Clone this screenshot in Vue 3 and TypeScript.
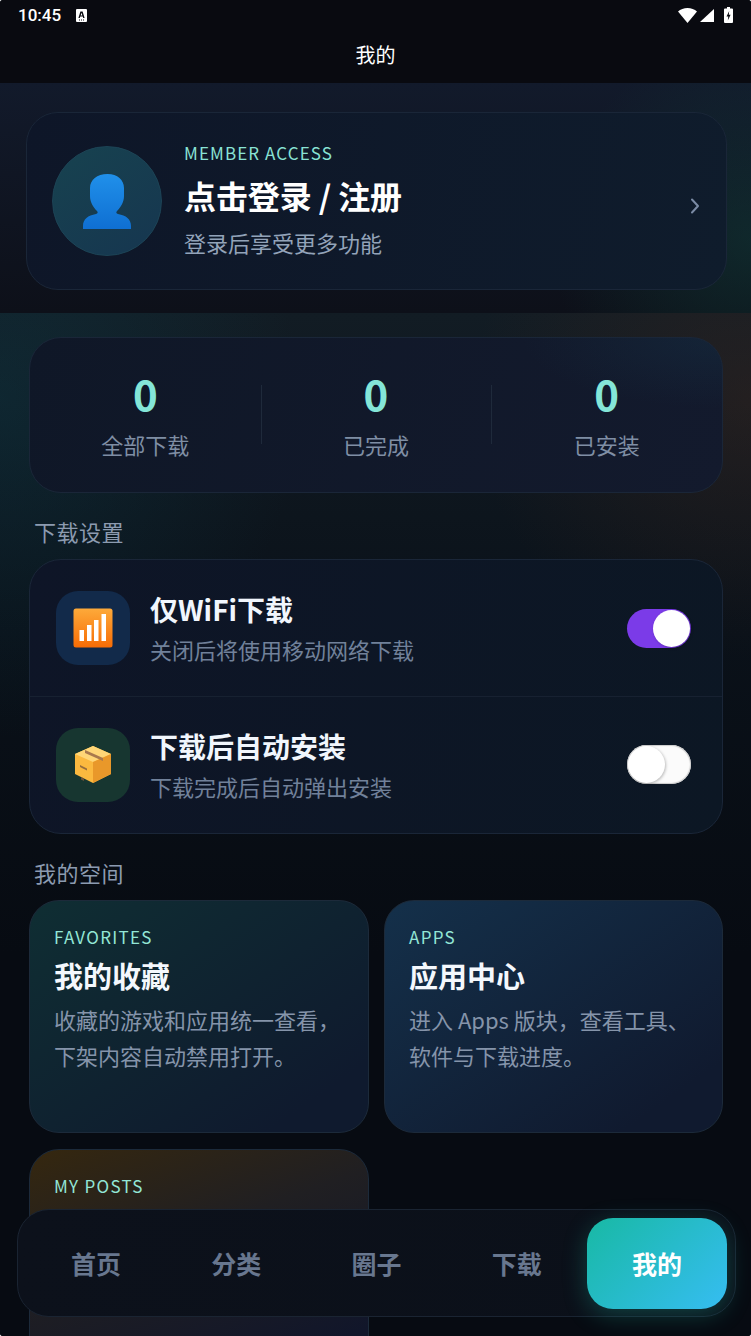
<script setup lang="ts">
type Stat = { label: string; value: number }
type Tile = { tag: string; title?: string; lines?: string[]; tone: string }

const stats: Stat[] = [
  { label: '全部下载', value: 0 },
  { label: '已完成', value: 0 },
  { label: '已安装', value: 0 },
]

// 第三张卡片的内容被底部导航挡住了，只露出标签
const tiles: Tile[] = [
  { tag: 'FAVORITES', title: '我的收藏', lines: ['收藏的游戏和应用统一查看，', '下架内容自动禁用打开。'], tone: 'green' },
  { tag: 'APPS', title: '应用中心', lines: ['进入 Apps 版块，查看工具、', '软件与下载进度。'], tone: 'blue' },
  { tag: 'MY POSTS', tone: 'amber' },
]

const navItems = ['首页', '分类', '圈子', '下载', '我的']
</script>

<template>
  <div class="phone">
    <header class="top">
      <div class="status">
        <span class="time">10:45</span>
        <svg class="status-a" width="11" height="13" viewBox="0 0 11 13">
          <path fill="#fff" d="M1 0h9a1 1 0 0 1 1 1v11a1 1 0 0 1-1 1H1a1 1 0 0 1-1-1V1a1 1 0 0 1 1-1z" />
          <path fill="#090a10" d="M4.400 2.400h2.200l2 6.600H7.200l-.4-1.400H4.200L3.800 9H2.400zm.2 4h1.800l-.9-2.700zM3 10.400h1v1H3zm2 0h1v1H5zm2 0h1v1H7z" />
        </svg>
        <span class="spacer"></span>
        <svg width="19" height="15" viewBox="0 0 19 15"><path fill="#fff" d="M0 3.600C2.500 1.300 5.800 0 9.500 0S16.500 1.300 19 3.600L9.500 15z" /></svg>
        <svg class="sig" width="14" height="13" viewBox="0 0 14 13"><path fill="#fff" d="M14 0v13H0z" /></svg>
        <svg class="bat" width="9" height="16" viewBox="0 0 9 16">
          <path fill="#fff" d="M3 0h3v1.500h2a1 1 0 0 1 1 1V15a1 1 0 0 1-1 1H1a1 1 0 0 1-1-1V2.500a1 1 0 0 1 1-1h2z" />
          <path fill="#090a10" d="M5.200 4 2.500 9.400h1.800L3.800 13.400l2.800-5.600H4.800z" />
        </svg>
      </div>
      <h1 class="page-title">我的</h1>
    </header>

    <section class="hero">
      <div class="login-card">
        <div class="avatar">
          <svg width="48" height="55" viewBox="0 0 48 55">
            <defs>
              <linearGradient id="personFill" x1="0" y1="0" x2="0" y2="1">
                <stop offset="0" stop-color="#2090ea" />
                <stop offset="1" stop-color="#0f6fd2" />
              </linearGradient>
            </defs>
            <path fill="url(#personFill)" d="M24.500 0C34.500 0 41 6 41 14v8c0 6-3 11-7 15-1.200 1.200-.8 2.500 1 3 8 1.500 13 5 13 12v3H0v-3c0-7 5-10.500 13-12 1.800-.5 2.200-1.800 1-3-4-4-7-9-7-15v-8C7 6 14 0 24.500 0z" />
          </svg>
        </div>
        <div class="login-text">
          <div class="eyebrow">MEMBER ACCESS</div>
          <div class="login-title">点击登录 / 注册</div>
          <div class="login-sub">登录后享受更多功能</div>
        </div>
        <svg class="chev" width="10" height="16" viewBox="0 0 10 16">
          <path d="M2 1.500 8 8l-6 6.500" fill="none" stroke="#7b8ba5" stroke-width="2" stroke-linecap="round" stroke-linejoin="round" />
        </svg>
      </div>
    </section>

    <main class="content">
      <div class="card stats">
        <div v-for="s in stats" :key="s.label" class="stat">
          <div class="stat-value">{{ s.value }}</div>
          <div class="stat-label">{{ s.label }}</div>
        </div>
      </div>

      <div class="section-label">下载设置</div>
      <div class="card settings">
        <div class="row">
          <div class="row-icon navy">
            <svg width="40" height="40" viewBox="0 0 40 40">
              <defs>
                <linearGradient id="barsBg" x1="0" y1="0" x2="0" y2="1">
                  <stop offset="0" stop-color="#fdaa3a" />
                  <stop offset="1" stop-color="#f76c05" />
                </linearGradient>
              </defs>
              <rect x="0.500" y="0.500" width="39" height="39" rx="2.500" fill="url(#barsBg)" />
              <rect x="6.500" y="22" width="4.500" height="11" fill="#fff" />
              <rect x="14" y="17" width="4.500" height="16" fill="#fff" />
              <rect x="21" y="12" width="4.500" height="21" fill="#fff" />
              <rect x="28.500" y="6" width="4.500" height="27" fill="#fff" />
            </svg>
          </div>
          <div class="row-text">
            <div class="row-title">仅WiFi下载</div>
            <div class="row-sub">关闭后将使用移动网络下载</div>
          </div>
          <div class="switch on"><span class="knob"></span></div>
        </div>
        <div class="row divided">
          <div class="row-icon pine">
            <svg width="38" height="38" viewBox="0 0 38 38">
              <path fill="#fbb93f" d="M19 0 37 8v20L19 37 1 28V8z" />
              <path fill="#ffd677" d="M19 0 37 8 19 16 1 8z" />
              <path fill="#e9982a" d="M19 16 37 8v20L19 37z" />
              <path fill="#a9794d" d="M11 4 29 12v3L11 7z" />
              <path fill="#7f5b3c" d="M6 19l7 3.500v2L6 21zM7 31l3 1.500V35l-3-1.500z" opacity=".8" />
            </svg>
          </div>
          <div class="row-text">
            <div class="row-title">下载后自动安装</div>
            <div class="row-sub">下载完成后自动弹出安装</div>
          </div>
          <div class="switch"><span class="knob"></span></div>
        </div>
      </div>

      <div class="section-label">我的空间</div>
      <div class="tiles">
        <div v-for="t in tiles" :key="t.tag" class="tile" :class="t.tone">
          <div class="tile-tag">{{ t.tag }}</div>
          <div v-if="t.title" class="tile-title">{{ t.title }}</div>
          <div v-if="t.lines" class="tile-desc">
            <div v-for="line in t.lines" :key="line">{{ line }}</div>
          </div>
        </div>
      </div>
    </main>

    <nav class="bottom-nav">
      <div v-for="(item, i) in navItems" :key="item" class="nav-item" :class="{ active: i === 4 }">{{ item }}</div>
    </nav>
  </div>
</template>

<style>
html, body {
  margin: 0;
  background: #fff;
}
</style>

<style scoped>
.phone {
  position: relative;
  width: 751px;
  height: 1336px;
  overflow: hidden;
  border-radius: 3px;
  font-family: "Noto Sans CJK SC", "Noto Sans", sans-serif;
  color: #f1f5fb;
  background: #070b12;
}

.top {
  height: 83px;
  box-sizing: border-box;
  background: #090a10;
  color: #fff;
}

.status {
  height: 30px;
  display: flex;
  align-items: center;
  padding: 0 18px 0 18px;
  font-family: Roboto, sans-serif;
}

.time {
  font-size: 17px;
  font-weight: 500;
}

.status-a {
  margin-left: 15px;
}

.spacer {
  flex: 1;
}

.sig {
  margin-left: 3px;
  margin-top: 1px;
}

.bat {
  margin-left: 10px;
}

.page-title {
  margin: 10px 0 0;
  text-align: center;
  font-size: 20px;
  line-height: 30px;
  font-weight: 400;
}

.hero {
  height: 230px;
  box-sizing: border-box;
  padding: 29px 24px 0 26px;
  background:
    radial-gradient(200px 200px at 100% 68%, rgba(18, 80, 68, 0.34), transparent 100%),
    linear-gradient(180deg, #121a2b, #0d1019);
}

.login-card {
  height: 178px;
  box-sizing: border-box;
  display: flex;
  align-items: center;
  padding: 0 26px 0 25px;
  border: 1px solid #1a2638;
  border-radius: 32px;
  background: linear-gradient(100deg, #0e1628, #0f1c2c);
}

.avatar {
  width: 110px;
  height: 110px;
  box-sizing: border-box;
  flex: none;
  display: flex;
  align-items: center;
  justify-content: center;
  border-radius: 50%;
  border: 1px solid #1d4456;
  background: linear-gradient(145deg, #17424f, #163650);
}

.avatar svg {
  margin-top: 1px;
}

.login-text {
  flex: 1;
  margin-left: 22px;
  padding-bottom: 3px;
}

.eyebrow {
  font-size: 17px;
  line-height: 24px;
  letter-spacing: 1.100px;
  color: #89e3d5;
}

.login-title {
  margin-top: 9px;
  font-size: 32px;
  line-height: 42px;
  font-weight: 700;
  letter-spacing: -0.100px;
  color: #fff;
}

.login-sub {
  margin-top: 10px;
  font-size: 22px;
  line-height: 32px;
  color: #93a3b9;
}

.chev {
  margin-top: 10px;
}

.content {
  min-height: 1023px;
  box-sizing: border-box;
  padding: 24px 28px 0 29px;
  background:
    radial-gradient(280px 260px at 100% 8%, rgba(80, 45, 30, 0.3), transparent 100%),
    radial-gradient(300px 340px at 0% 8%, rgba(12, 70, 85, 0.3), transparent 100%),
    linear-gradient(180deg, #121c24 0%, #0a1119 30%, #070b12 60%);
}

.card {
  border: 1px solid #1a2638;
  border-radius: 32px;
}

.stats {
  height: 156px;
  box-sizing: border-box;
  display: grid;
  grid-template-columns: repeat(3, 1fr);
  background:
    radial-gradient(200px 70px at 100% 0%, rgba(24, 60, 80, 0.3), transparent 100%),
    linear-gradient(110deg, #0f1727, #131a2d);
}

.stat {
  position: relative;
  display: flex;
  flex-direction: column;
  align-items: center;
  justify-content: center;
  padding-top: 1px;
}

.stat + .stat::before {
  content: "";
  position: absolute;
  left: 0;
  top: 47px;
  height: 59px;
  width: 1px;
  background: #1f2a3b;
}

.stat-value {
  font-size: 42px;
  line-height: 46px;
  font-weight: 700;
  color: #84e6d8;
}

.stat-label {
  margin-top: 11px;
  font-size: 22px;
  line-height: 34px;
  color: #7f8ea4;
}

.section-label {
  margin: 22px 0 12px 5px;
  font-size: 22px;
  line-height: 32px;
  letter-spacing: 0.500px;
  color: #8c9bb0;
}

.settings {
  height: 275px;
  box-sizing: border-box;
  background: linear-gradient(100deg, #0e1527, #0c1724);
}

.row {
  height: 136px;
  box-sizing: border-box;
  display: flex;
  align-items: center;
  padding: 0 31px 0 26px;
}

.row.divided {
  height: 137px;
  border-top: 1px solid #172131;
}

.row-icon {
  width: 74px;
  height: 74px;
  flex: none;
  display: flex;
  align-items: center;
  justify-content: center;
  border-radius: 22px;
}

.row-icon.navy {
  background: #122a4a;
}

.row-icon.pine {
  background: #173630;
}

.row-text {
  flex: 1;
  margin-left: 20px;
  margin-bottom: 1px;
}

.row-title {
  font-size: 28px;
  line-height: 38px;
  font-weight: 700;
  color: #f1f6fd;
}

.row-sub {
  margin-top: 5px;
  font-size: 22px;
  line-height: 32px;
  color: #71819a;
}

.switch {
  position: relative;
  width: 64px;
  height: 39px;
  box-sizing: border-box;
  border-radius: 20px;
  background: #fbfbfb;
  box-shadow: inset 0 0 1px 1px #c9c9c9;
}

.switch.on {
  background: #7b3be8;
  box-shadow: none;
}

.row.divided .switch {
  margin-top: -1px;
}

.knob {
  position: absolute;
  left: 1px;
  top: 1px;
  width: 37px;
  height: 37px;
  border-radius: 50%;
  background: #fff;
  box-shadow: 1px 1px 3px rgba(0, 0, 0, 0.25);
}

.switch.on .knob {
  left: 26px;
}

.tiles {
  display: grid;
  grid-template-columns: 340px 339px;
  gap: 16px 15px;
}

.tile {
  height: 233px;
  box-sizing: border-box;
  padding: 24px 24px 0;
  border: 1px solid #1c2a3a;
  border-radius: 30px;
}

.tile.green {
  background: linear-gradient(145deg, #0f2e33, #0f1a2e 85%);
}

.tile.blue {
  background: linear-gradient(145deg, #14304a, #101a2f 85%);
}

.tile.amber {
  background: linear-gradient(160deg, #35270f, #201f22 40%, #11162a 85%);
}

.tile-tag {
  font-size: 17px;
  line-height: 24px;
  letter-spacing: 1.300px;
  color: #93e6d6;
}

.tile-title {
  margin-top: 6px;
  font-size: 29px;
  line-height: 40px;
  font-weight: 700;
  color: #f4f8fd;
}

.tile-desc {
  margin-top: 6px;
  font-size: 22px;
  line-height: 36px;
  color: #8594aa;
}

.bottom-nav {
  position: absolute;
  left: 17px;
  top: 1209px;
  width: 719px;
  height: 108px;
  box-sizing: border-box;
  display: flex;
  align-items: center;
  padding: 0 8px 0 8px;
  border: 1px solid #1a2432;
  border-radius: 32px;
  background: linear-gradient(100deg, #0c111b, #0b1019);
}

.nav-item {
  flex: 1;
  height: 91px;
  display: flex;
  align-items: center;
  justify-content: center;
  font-size: 25px;
  font-weight: 700;
  color: #68778f;
}

.nav-item.active {
  color: #fff;
  border-radius: 26px;
  background: linear-gradient(135deg, #18b9a4, #36bdf2);
  box-shadow: 0 6px 24px rgba(28, 190, 170, 0.28);
}
</style>
